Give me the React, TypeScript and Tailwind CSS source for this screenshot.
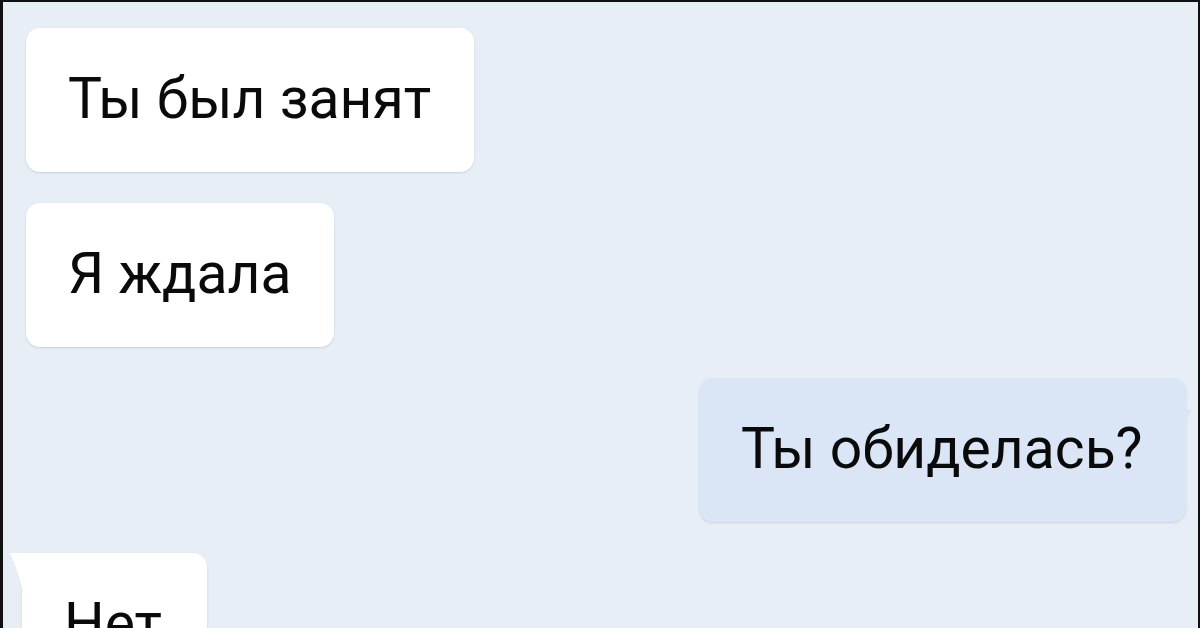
import React from "react";

function Bubble({
  text,
  blue,
  className,
}: {
  text: string;
  blue?: boolean;
  className?: string;
}) {
  return (
    <div
      className={`relative h-[144px] shrink-0 rounded-[14px] pl-[42px] pr-[43px] pt-[42px] shadow-[0_1px_2px_rgba(60,80,110,0.18)] ${
        blue ? "bg-[#dae6f6]" : "bg-white"
      } ${className ?? ""}`}
    >
      <div
        className="whitespace-nowrap text-[57px] leading-[57px] text-[#0a0a0a]"
        style={{ fontFamily: "Roboto, 'Noto Sans', sans-serif" }}
      >
        {text}
      </div>
    </div>
  );
}

export default function App() {
  return (
    <div className="h-[628px] w-[1200px] overflow-hidden border-l-[3px] border-r-2 border-t-2 border-[#111] bg-[#e8eef5]">
      <div className="flex flex-col gap-[31px] pt-[26px]">
        <Bubble text="Ты был занят" className="ml-[23px] self-start" />
        <Bubble text="Я ждала" className="ml-[23px] self-start" />
        <div className="relative mr-[12px] self-end">
          <Bubble text="Ты обиделась?" blue className="w-[487px]" />
          <svg
            className="absolute right-[-7px] top-[32px]"
            width="10"
            height="24"
            viewBox="0 0 10 24"
          >
            <path d="M0 0 L0 24 L2 24 C2 14 4 6 9 0 Z" fill="#dae6f6" />
          </svg>
        </div>
        <div className="relative ml-[19px] self-start">
          <Bubble text="Нет" className="w-[185px] rounded-tl-none" />
          <svg
            className="absolute left-[-14px] top-[0px]"
            width="16"
            height="44"
            viewBox="0 0 16 44"
          >
            <path d="M16 0 L2 0 C6 10 12 22 16 44 Z" fill="#ffffff" />
          </svg>
        </div>
      </div>
    </div>
  );
}
